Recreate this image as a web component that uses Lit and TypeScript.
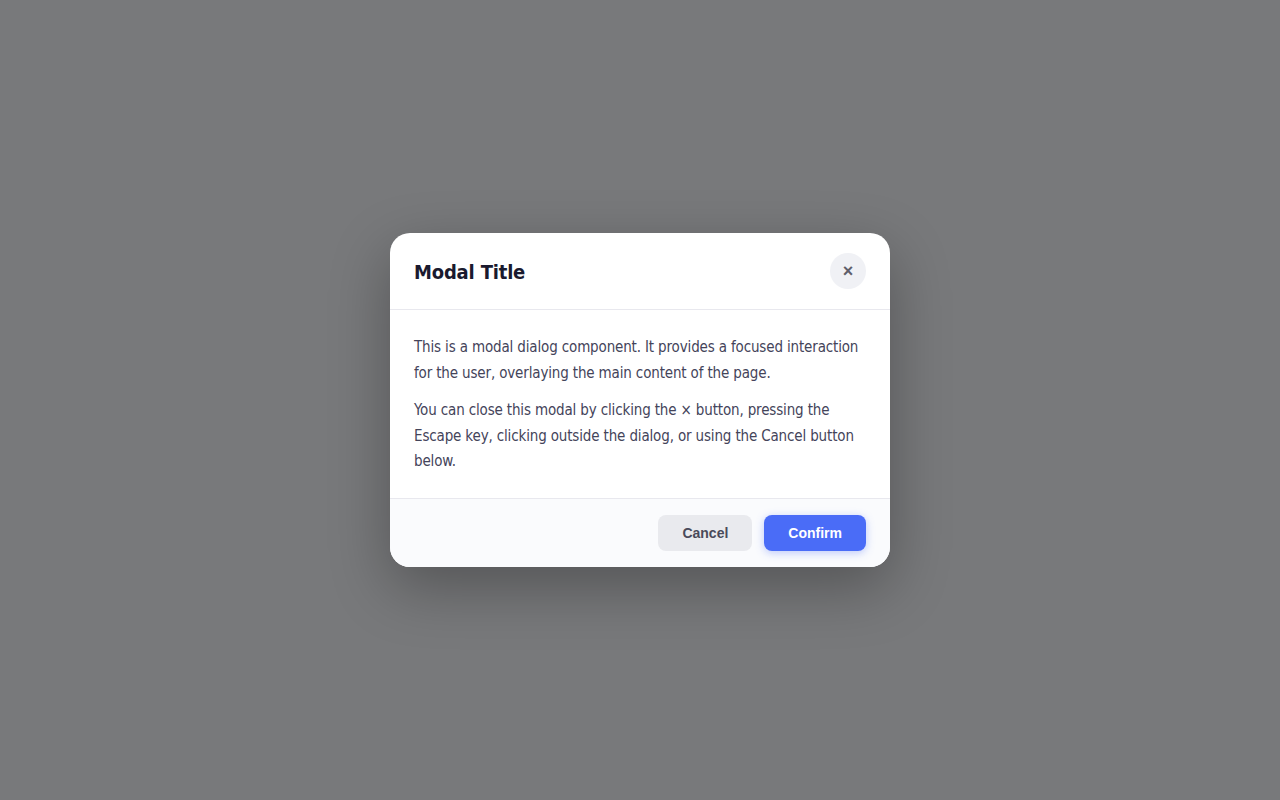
import { LitElement, html, css } from "lit";
import { customElement } from "lit/decorators.js";

@customElement("app-root")
export class AppRoot extends LitElement {
  static styles = css`
    :host { display: block; }
    .overlay {
      width: 1280px; height: 800px; background: #78797b;
      display: flex; align-items: center; justify-content: center;
      font-family: "DejaVu Sans Condensed", sans-serif;
    }
    .dialog {
      width: 500px; background: #fff; border-radius: 20px; overflow: hidden;
      box-shadow: 0 20px 60px rgba(0,0,0,0.3);
    }
    .header {
      display: flex; align-items: center; justify-content: space-between;
      padding: 20px 24px; border-bottom: 1px solid #e8e8ee;
    }
    h2 { margin: 0; padding-top: 2px; font-size: 20px; letter-spacing: -0.18px; font-weight: 700; color: #1a1a2e; }
    .close {
      width: 36px; height: 36px; border: none; border-radius: 50%;
      background: #f0f1f5; color: #5f5f6b; font-size: 18px; padding: 0;
      font-family: "Liberation Sans", sans-serif; font-weight: 700;
      display: flex; align-items: center; justify-content: center;
    }
    .body { padding: 25px 24px 23px; font-size: 15px; letter-spacing: -0.15px; line-height: 25.5px; color: #44445a; }
    p { margin: 0 0 12px; }
    p:last-child { margin: 0; }
    .footer {
      display: flex; justify-content: flex-end; gap: 12px; padding: 16px 24px;
      background: #fafbfd; border-top: 1px solid #e8e8ee;
    }
    button.btn {
      height: 36px; padding: 0 24px; border: none; border-radius: 8px;
      font-family: "Liberation Sans", sans-serif; font-size: 14px; font-weight: 700;
    }
    .cancel { background: #e9eaee; color: #4a4a5a; }
    .confirm { background: #4a6cf7; color: #fff; box-shadow: 0 2px 8px rgba(74,108,247,0.35); }
  `;
  render() {
    return html`<div class="overlay">
      <div class="dialog">
        <div class="header"><h2>Modal Title</h2><button class="close">×</button></div>
        <div class="body">
          <p>This is a modal dialog component. It provides a focused interaction for the user, overlaying the main content of the page.</p>
          <p>You can close this modal by clicking the × button, pressing the Escape key, clicking outside the dialog, or using the Cancel button below.</p>
        </div>
        <div class="footer"><button class="btn cancel">Cancel</button><button class="btn confirm">Confirm</button></div>
      </div>
    </div>`;
  }
}
